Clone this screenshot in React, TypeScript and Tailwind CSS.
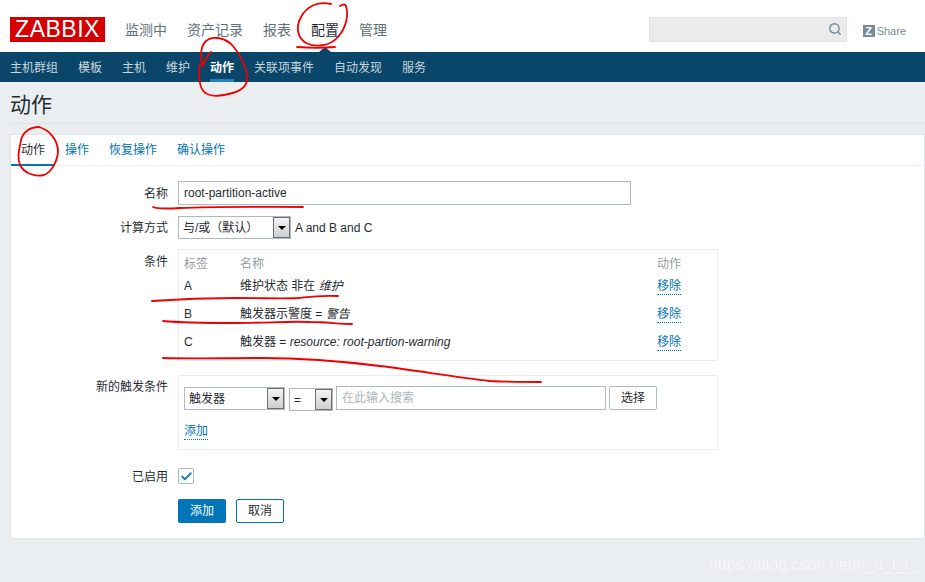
import type { ReactNode } from 'react'
import { Search, Check } from 'lucide-react'

const FONT = 'font-["Liberation_Sans","Noto_Sans_CJK_SC",sans-serif]'

const NAV = ['监测中', '资产记录', '报表', '配置', '管理']
const SUBNAV = ['主机群组', '模板', '主机', '维护', '动作', '关联项事件', '自动发现', '服务']
const TABS = ['动作', '操作', '恢复操作', '确认操作']

// Old-style native select: white field with a grey arrow button on the right
function FakeSelect({ label, width }: { label: string; width: string }) {
  return (
    <div className={`flex h-[23px] items-stretch border border-[#acbbc2] bg-white ${width}`}>
      <span className="flex-1 pl-[4px] leading-[23px] text-[#1f2c33]">{label}</span>
      <span className="flex w-[17px] items-center justify-center border border-[#6e6e6e] bg-gradient-to-b from-[#f4f4f4] to-[#cfcfcf]">
        <span className="h-0 w-0 border-x-[4px] border-t-[4px] border-x-transparent border-t-black" />
      </span>
    </div>
  )
}

function Row({ label, labelTop = 'pt-0', className = '', children }: { label: string; labelTop?: string; className?: string; children: ReactNode }) {
  return (
    <div className={`flex items-start ${className}`}>
      <div className={`w-[157px] shrink-0 text-right text-[#1f2c33] ${labelTop}`}>{label}</div>
      <div className="ml-[10px] flex-1">{children}</div>
    </div>
  )
}

function CondRow({ tag, name, top }: { tag: string; name: ReactNode; top: string }) {
  return (
    <div className={`flex h-[18px] items-center ${top}`}>
      <span className="w-[56px] text-[#1f2c33]">{tag}</span>
      <span className="w-[417px] text-[#1f2c33]">{name}</span>
      <a className="mt-[2px] border-b border-dotted border-[#0275b8] leading-[15px] text-[#0275b8]">移除</a>
    </div>
  )
}

// Red pen marks drawn over the screenshot
function Annotations() {
  return (
    <svg className="pointer-events-none absolute left-0 top-0" width="925" height="582" fill="none" stroke="#f00000" strokeWidth="1.8" strokeLinecap="round" strokeLinejoin="round">
      <path d="M331 4C318 1 307 6 301 17C295 28 298 38 306 43C316 48 330 46 338 37C346 28 349 15 346 6C345 4 343 4 340 6" />
      <path d="M297 47C310 48 324 48 335 47" />
      <path d="M211 52C207 56 204 61 203 66C200 58 200 47 206 41C213 35 226 38 233 46C241 55 248 70 247 81C245 90 235 93 224 95C213 97 204 96 201 87C198 77 199 70 200 64" />
      <path d="M39 127C30 127 23 132 21 140C19 150 17 158 20 165C24 173 34 177 44 175C52 172 58 160 58 150C57 140 50 130 39 127" />
      <path d="M153 207C158 209 165 209 180 208C220 206 265 207 303 207" />
      <path d="M152 301C180 299 205 298 235 298C265 298 285 299 298 298C308 297 318 295 338 296" />
      <path d="M163 321C185 323 205 323 235 323C265 323 290 321 310 322C325 322 340 324 352 324" />
      <path d="M163 358C190 359 225 358 262 358C300 358 340 361 380 366C420 371 455 377 490 381C510 382 525 382 541 382" />
    </svg>
  )
}

export default function App() {
  return (
    <div className={`relative h-[582px] w-[925px] overflow-hidden bg-[#ebeef0] text-[12px] ${FONT}`}>
      {/* Top bar */}
      <header className="flex h-[52px] items-start bg-white pl-[10px]">
        <div className="mt-[17px] flex h-[25px] w-[95px] items-center justify-center bg-[#d40000] text-[23px] leading-none tracking-[0.5px] text-white">ZABBIX</div>
        <nav className="ml-[10px] mt-[20px] flex">
          {NAV.map((item) => (
            <span key={item} className={`relative px-[10px] text-[14px] ${item === '配置' ? 'text-[#1f2c33]' : 'text-[#5f7078]'}`}>
              {item}
            </span>
          ))}
        </nav>
        <div className="ml-auto mt-[17px] flex h-[25px] w-[198px] items-center justify-end border border-[#e3e3e3] bg-[#ebebeb] pr-[4px]">
          <Search size={14} strokeWidth={2.5} className="mt-[-2px] text-[#768d99]" />
        </div>
        <div className="ml-[16px] mr-[19px] mt-[23px] flex items-center gap-[2px] text-[11px] text-[#768d99]">
          <span className="flex h-[12px] w-[12px] items-center justify-center bg-[#768d99] text-[11px] font-bold leading-none text-white">Z</span>
          Share
        </div>
      </header>

      {/* Sub navigation */}
      <div className="relative flex h-[30px] bg-[#0a466a] pl-[10px] text-[#c9d6de]">
        <span className="absolute left-[319px] top-[-5px] h-0 w-0 border-x-[6px] border-b-[5px] border-x-transparent border-b-[#0a466a]" />
        {SUBNAV.map((item) => (
          <span
            key={item}
            className={`mr-[20px] pt-[7px] ${item === '动作' ? 'border-b-[3px] border-[#1f82bf] font-bold text-white' : ''}`}
          >
            {item}
          </span>
        ))}
      </div>

      {/* Page title */}
      <div className="ml-[10px] flex h-[42px] items-center border-b border-[#dfe4e7] pt-[4px] text-[21px] text-[#1f2c33]">动作</div>

      {/* Form panel */}
      <div className="ml-[10px] mt-[10px] h-[405px] border border-[#dfe4e7] bg-white">
        <div className="flex h-[31px] border-b border-[#ebeef0]">
          {TABS.map((tab, i) => (
            <span
              key={tab}
              className={`h-[31px] px-[10px] pt-[6px] ${i === 0 ? 'border-b-[2px] border-[#0275b8] text-[#1f2c33]' : 'text-[#0275b8]'}`}
            >
              {tab}
            </span>
          ))}
        </div>

        <Row label="名称" labelTop="pt-[4px]" className="mt-[15px]">
          <div className="flex h-[24px] w-[453px] items-center border border-[#acbbc2] pl-[5px] text-[#1f2c33]">root-partition-active</div>
        </Row>

        <Row label="计算方式" labelTop="pt-[3px]" className="mt-[11px]">
          <div className="flex items-center">
            <FakeSelect label="与/或（默认）" width="w-[113px]" />
            <span className="ml-[4px] text-[#1f2c33]">A and B and C</span>
          </div>
        </Row>

        <Row label="条件" labelTop="pt-[4px]" className="mt-[10px]">
          <div className="h-[112px] w-[540px] border border-[#ebeef0] pl-[5px] pt-[6px]">
            <div className="flex h-[16px] items-center text-[#8f9ca3]">
              <span className="w-[56px]">标签</span>
              <span className="w-[417px]">名称</span>
              <span>动作</span>
            </div>
            <CondRow tag="A" top="mt-[5px]" name={<>维护状态 非在 <i>维护</i></>} />
            <CondRow tag="B" top="mt-[10px]" name={<>触发器示警度 = <i>警告</i></>} />
            <CondRow tag="C" top="mt-[10px]" name={<>触发器 = <i>resource: root-partion-warning</i></>} />
          </div>
        </Row>

        <Row label="新的触发条件" labelTop="pt-[3px]" className="mt-[14px]">
          <div className="h-[75px] w-[540px] border border-[#ebeef0] pl-[5px] pt-[10px]">
            <div className="flex items-start">
              <FakeSelect label="触发器" width="w-[101px] mt-[1px]" />
              <FakeSelect label="=" width="w-[44px] ml-[4px] mt-[2px]" />
              <div className="ml-[3px] flex h-[24px] w-[270px] items-center border border-[#acbbc2] pl-[5px] text-[#acb5ba]">在此输入搜索</div>
              <div className="ml-[3px] flex h-[24px] w-[48px] items-center justify-center rounded-[2px] border border-[#acbbc2] text-[#1f2c33]">选择</div>
            </div>
            <a className="mt-[13px] inline-block border-b border-dotted border-[#0275b8] leading-[15px] text-[#0275b8]">添加</a>
          </div>
        </Row>

        <Row label="已启用" labelTop="pt-[0px]" className="mt-[18px]">
          <div className="flex h-[16px] w-[16px] items-center justify-center rounded-[2px] border border-[#acbbc2]">
            <Check size={13} strokeWidth={3.5} className="text-[#1f82bf]" />
          </div>
        </Row>

        <div className="ml-[167px] mt-[13px] flex gap-[10px]">
          <button className="h-[24px] w-[48px] rounded-[2px] bg-[#0275b8] text-white">添加</button>
          <button className="h-[24px] w-[48px] rounded-[2px] border border-[#0275b8] text-[#1f2c33]">取消</button>
        </div>
      </div>

      {/* Blog watermark */}
      <div className="absolute right-[8px] top-[553px] text-[16px] text-white/70 [text-shadow:0_0_1px_rgba(200,200,200,0.2)]">https://blog.csdn.net/n_u_l_l_</div>

      <Annotations />
    </div>
  )
}
